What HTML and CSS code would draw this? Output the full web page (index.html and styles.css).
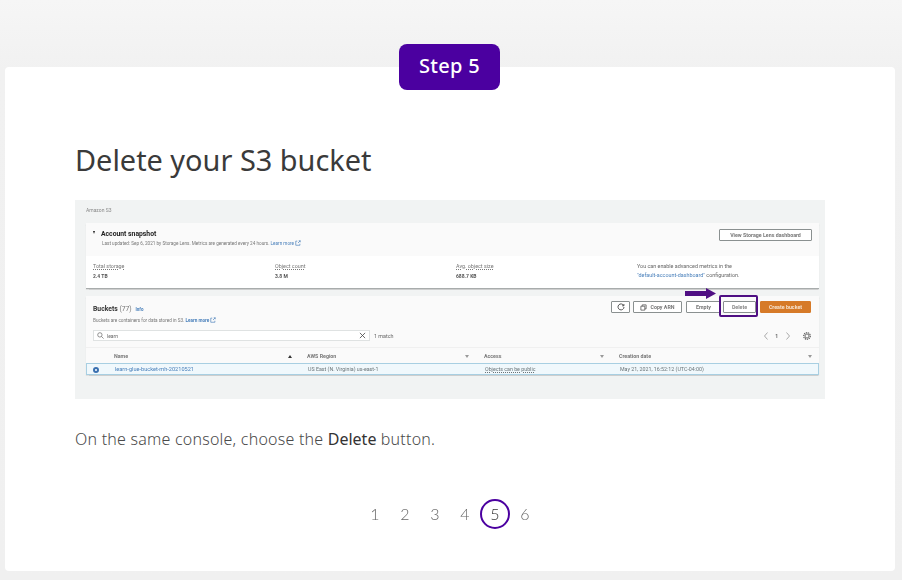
FILE: index.html
```html
<!DOCTYPE html>
<html lang="en">
<head>
<meta charset="utf-8">
<title>Delete your S3 bucket</title>
<link rel="stylesheet" href="styles.css">
</head>
<body>
<main class="page">
  <div class="badge">Step 5</div>
  <section class="card">
    <h1 class="title">Delete your S3 bucket</h1>
    <div class="shot">
      <div class="crumb">Amazon S3</div>
      <div class="panel snapshot">
        <div class="panel-head snap-head">
          <div class="snap-title">
            <div class="h-snap"><i class="caret"></i>Account snapshot</div>
            <div class="sub snap-sub">Last updated: Sep 6, 2021 by Storage Lens. Metrics are generated every 24 hours. <span class="link">Learn more</span>
              <svg class="ext" viewBox="0 0 8 8"><path d="M1 1.500h2M1 1.500v5.500h5.500v-2M4 4l3-3M5 1h2v2" fill="none" stroke="#4a80bb" stroke-width=".9"/></svg>
            </div>
          </div>
          <span class="btn btn-lens">View Storage Lens dashboard</span>
        </div>
        <div class="metrics">
          <div class="metric"><div class="m-label">Total storage</div><div class="m-value">2.4 TB</div></div>
          <div class="metric"><div class="m-label">Object count</div><div class="m-value">3.8 M</div></div>
          <div class="metric"><div class="m-label">Avg. object size</div><div class="m-value">688.7 KB</div></div>
          <div class="metric note">You can enable advanced metrics in the<br><span class="link">"default-account-dashboard"</span> configuration.</div>
        </div>
      </div>
      <div class="panel buckets">
        <div class="bk-head">
          <div class="bk-title">
            <div class="h-bk">Buckets <span class="count">(77)</span> <span class="info">Info</span></div>
            <div class="sub bk-sub">Buckets are containers for data stored in S3. <span class="link bold">Learn more</span>
              <svg class="ext" viewBox="0 0 8 8"><path d="M1 1.500h2M1 1.500v5.500h5.500v-2M4 4l3-3M5 1h2v2" fill="none" stroke="#4a80bb" stroke-width=".9"/></svg>
            </div>
          </div>
          <div class="actions">
            <span class="btn btn-icon"><svg class="i8" viewBox="0 0 8 8"><path d="M6.700 2.600A3 3 0 1 0 7 4M6.900 1v1.800H5.100" fill="none" stroke="#444" stroke-width=".9"/></svg></span>
            <span class="btn btn-copy"><svg class="i7" viewBox="0 0 8 8"><path d="M2.500 2.500V1h4.500v4.500H5.500M1 2.500h4.500V7H1z" fill="none" stroke="#555" stroke-width=".9"/></svg>Copy ARN</span>
            <span class="btn btn-empty">Empty</span>
            <span class="btn btn-delete">Delete</span>
            <span class="btn btn-create">Create bucket</span>
          </div>
        </div>
        <div class="filter-row">
          <div class="search">
            <svg class="i7" viewBox="0 0 8 8"><circle cx="3.300" cy="3.300" r="2.500" fill="none" stroke="#666" stroke-width=".8"/><path d="M5.200 5.200l2.300 2.300" stroke="#666" stroke-width=".8"/></svg>
            <span class="search-text">learn</span>
            <svg class="i7" viewBox="0 0 8 8"><path d="M1 1l6 6M7 1l-6 6" stroke="#444" stroke-width=".9"/></svg>
          </div>
          <span class="matches">1 match</span>
          <div class="pager">
            <svg class="chev" viewBox="0 0 4 8"><path d="M3.500.5L.5 4l3 3.500" fill="none" stroke="#888" stroke-width=".7"/></svg>
            <span class="pg-num">1</span>
            <svg class="chev" viewBox="0 0 4 8"><path d="M.5.5l3 3.500-3 3.500" fill="none" stroke="#888" stroke-width=".7"/></svg>
            <svg class="gear" viewBox="0 0 8 8"><circle cx="4" cy="4" r="3.300" fill="none" stroke="#555" stroke-width="1.100" stroke-dasharray="1.300 .7"/><circle cx="4" cy="4" r="2" fill="none" stroke="#555" stroke-width=".8"/></svg>
          </div>
        </div>
        <div class="row thead">
          <span class="cell c-sel"></span>
          <span class="cell c-name">Name<i class="sort up"></i></span>
          <span class="cell c-region">AWS Region<i class="sort"></i></span>
          <span class="cell c-access">Access<i class="sort"></i></span>
          <span class="cell c-date">Creation date<i class="sort"></i></span>
        </div>
        <div class="row tbody">
          <span class="cell c-sel"><i class="radio"></i></span>
          <span class="cell c-name link">learn-glue-bucket-mh-20210521</span>
          <span class="cell c-region">US East (N. Virginia) us-east-1</span>
          <span class="cell c-access dotted">Objects can be public</span>
          <span class="cell c-date">May 21, 2021, 16:52:12 (UTC-04:00)</span>
        </div>
      </div>
      <svg class="arrow" viewBox="0 0 31 11"><path d="M0 3h21V0l10 5.500L21 11V8H0z" fill="#4f0f83"/></svg>
      <div class="ring"></div>
    </div>
    <p class="desc">On the same console, choose the <strong>Delete</strong> button.</p>
    <nav class="steps">
      <span class="step">1</span>
      <span class="step">2</span>
      <span class="step">3</span>
      <span class="step">4</span>
      <span class="step current">5</span>
      <span class="step">6</span>
    </nav>
  </section>
</main>
</body>
</html>
```
FILE: styles.css
```css
* { box-sizing: border-box; }
html, body { margin: 0; padding: 0; }
body {
  width: 902px;
  height: 580px;
  overflow: hidden;
  background: linear-gradient(180deg, #f6f6f6 0, #f1f1f1 70px, #f0f0f0 100%);
  font-family: "Noto Sans", sans-serif;
  color: #333;
}
.page {
  display: flex;
  flex-direction: column;
  align-items: center;
  padding: 44px 7px 0 5px;
}
.badge {
  position: relative;
  z-index: 1;
  width: 101px;
  height: 46px;
  margin: 0 1px -23px 0;
  background: #4b00a0;
  border-radius: 8px;
  color: #fff;
  font-size: 20px;
  font-weight: 500;
  line-height: 44px;
  text-align: center;
  letter-spacing: .3px;
}
.card {
  width: 890px;
  height: 504px;
  background: #fff;
  border-radius: 4px;
  padding: 72px 70px 0;
}
.title {
  margin: 0 0 19px;
  font-size: 28.900px;
  font-weight: 400;
  line-height: 42px;
  color: #3a3a3a;
}
.shot {
  position: relative;
  width: 750px;
  height: 199px;
  background: #f1f3f3;
  padding: 6px 6px 0 11px;
  font-family: "Roboto", sans-serif;
  font-size: 5.300px;
  color: #666;
  filter: blur(.55px);
}
.crumb { height: 17px; line-height: 8px; color: #888; font-size: 5px; }
.panel { background: #fff; width: 733px; box-shadow: 0 .5px 1px rgba(0,0,0,.15); }
.snapshot { height: 66px; border-bottom: 1px solid #a8acac; margin-bottom: 7px; }
.panel-head { display: flex; justify-content: space-between; }
.snap-head {
  height: 33px;
  background: #fafafa;
  padding: 6px 7px 0 7px;
}
.h-snap { font-size: 6.800px; font-weight: 700; color: #222; line-height: 11px; }
.caret {
  display: inline-block;
  margin: 0 6px 1px 0;
  vertical-align: 1px;
  border-left: 1.500px solid transparent;
  border-right: 1.500px solid transparent;
  border-top: 3px solid #222;
}
.sub { font-size: 4.650px; color: #777; line-height: 6px; }
.snap-sub { padding-left: 9px; }
.link { color: #4a80bb; }
.bold { font-weight: 700; }
.ext { width: 6px; height: 6px; vertical-align: -1px; }
.btn {
  display: inline-flex;
  align-items: center;
  justify-content: center;
  height: 12px;
  background: #fff;
  border: 1px solid #8a9090;
  border-radius: 1px;
  font-size: 5.300px;
  font-weight: 700;
  color: #777;
}
.btn-lens { width: 93px; }
.metrics {
  display: grid;
  grid-template-columns: 182px 181px 181px 1fr;
  padding: 7px 7px 0;
}
.m-label { font-size: 5.400px; color: #777; line-height: 6px; text-decoration: underline dotted; }
.m-value { font-size: 5px; font-weight: 700; color: #555; margin-top: 4px; line-height: 6px; }
.note { line-height: 9px; font-size: 5.400px; color: #666; margin-top: -1px; }
.buckets { height: 79px; background: #fafafa; }
.bk-head { display: flex; justify-content: space-between; padding: 5px 8px 0 7px; height: 33px; }
.h-bk { font-size: 6.800px; font-weight: 700; color: #333; line-height: 11px; margin-top: 3px; }
.count { font-weight: 400; color: #777; }
.info { font-size: 4.500px; color: #4a80bb; margin-left: 2px; }
.bk-sub { margin-top: 2px; }
.actions { display: flex; gap: 3px; }
.btn-icon { width: 19px; }
.btn-copy { width: 49px; gap: 3px; margin-right: 1px; }
.btn-empty { width: 35px; margin-right: -1px; }
.btn-delete { width: 33px; margin-right: 1px; color: #888; }
.btn-create { width: 51px; background: #d67a28; border-color: #d67a28; color: #f6e4d2; }
.i8 { width: 8px; height: 8px; }
.i7 { width: 7px; height: 7px; flex: none; }
.filter-row { display: flex; align-items: center; height: 13px; padding-left: 7px; }
.search {
  display: flex;
  align-items: center;
  gap: 3px;
  width: 277px;
  height: 11px;
  background: #fff;
  border: 1px solid #dfe2e2;
  padding: 0 3px;
  font-size: 5px;
}
.search-text { flex: 1; }
.matches { margin-left: 4px; font-size: 5.400px; }
.pager { display: flex; align-items: center; margin-left: auto; padding-right: 8px; gap: 7.500px; font-size: 5px; font-weight: 700; }
.chev { width: 4px; height: 8px; }
.gear { width: 8px; height: 8px; margin-left: 6px; }
.row { display: grid; grid-template-columns: 28px 193px 177px 135px 1fr; align-items: center; }
.thead { height: 16px; margin-top: 5px; background: #fafafa; font-weight: 700; color: #777; border-top: 1px solid #f0f0f0; }
.tbody { height: 12px; background: #f0f8fc; border: 1px solid #a8cfe2; color: #6a7478; }
.tbody .c-name { font-size: 5.600px; }
.cell { position: relative; padding-right: 8px; display: block; line-height: 10px; }
.c-sel { padding-left: 6px; }
.c-date { padding-right: 0; }
.sort {
  position: absolute;
  right: 15px;
  top: 4px;
  border-left: 2px solid transparent;
  border-right: 2px solid transparent;
  border-top: 3px solid #999;
}
.c-date .sort { right: 7px; }
.sort.up { border-top: 0; border-bottom: 3px solid #333; }
.radio { display: block; width: 6px; height: 6px; border-radius: 50%; background: #fff; border: 2px solid #3a70b0; margin-top: 2px; }
.dotted { text-decoration: underline dotted; }
.arrow { position: absolute; left: 610px; top: 88px; width: 31px; height: 11px; }
.ring {
  position: absolute;
  left: 644px;
  top: 95px;
  width: 39px;
  height: 22px;
  border: 2px solid #4f0f83;
  border-radius: 2px;
}
.desc {
  margin: 28px 0 0;
  font-size: 16px;
  font-weight: 300;
  line-height: 24px;
  letter-spacing: .22px;
  color: #4a4a4a;
}
.desc strong { font-weight: 400; color: #333; letter-spacing: 0; }
.steps {
  display: flex;
  justify-content: center;
  margin-top: 48px;
  opacity: .999;
}
.step {
  width: 30px;
  height: 30px;
  line-height: 30px;
  text-align: center;
  font-family: "Lato", sans-serif;
  font-size: 16px;
  font-weight: 300;
  color: #666;
}
.current {
  border: 2px solid #4b00a0;
  border-radius: 50%;
  line-height: 26px;
  color: #333;
}
```
